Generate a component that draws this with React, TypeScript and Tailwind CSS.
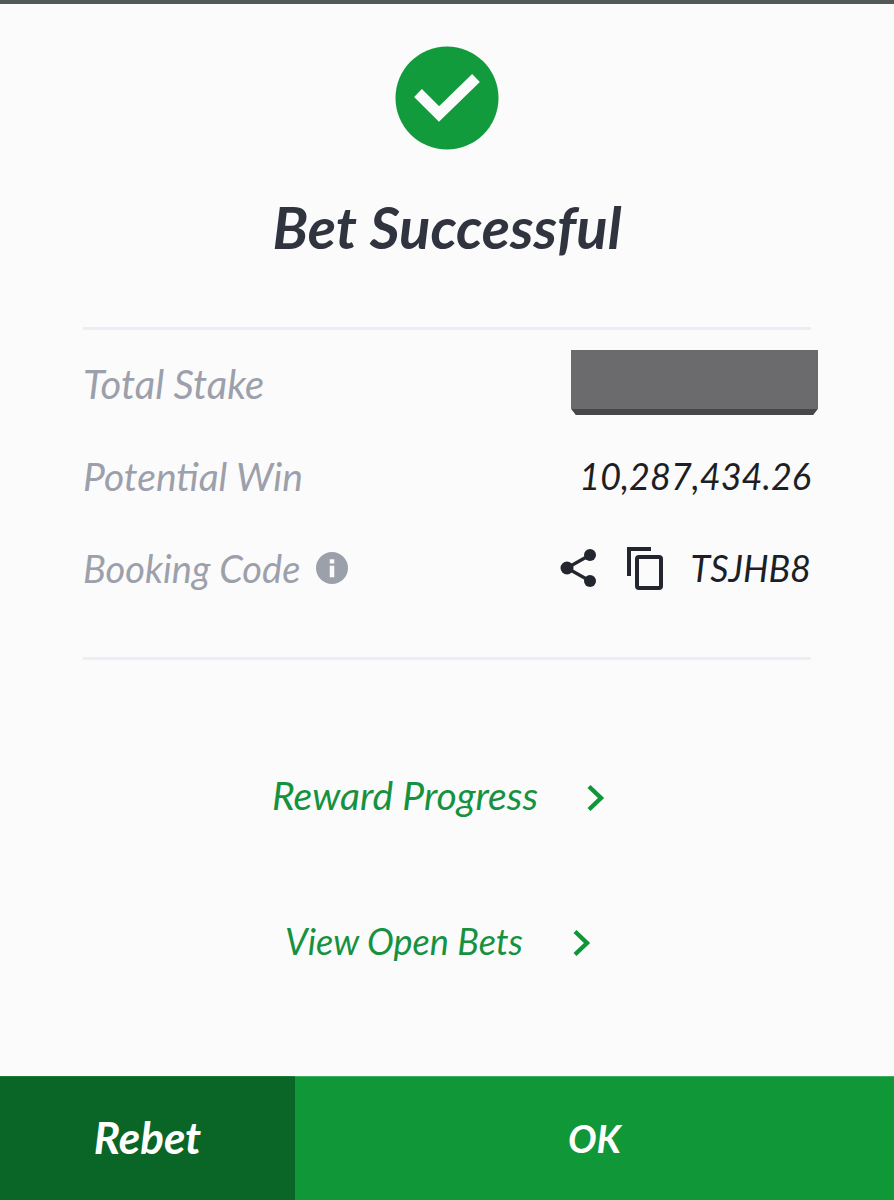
import React from "react";

const hand = "font-['Lato','Liberation_Sans',sans-serif] italic";

function Row({ label, labelClass, children, extra }: { label: string; labelClass: string; children: React.ReactNode; extra?: React.ReactNode }) {
  return (
    <div className="flex h-[92px] items-center justify-between">
      <div className="flex items-center gap-[16px]">
        <span className={`${labelClass} leading-none text-[#9ca0ab]`}>{label}</span>
        {extra}
      </div>
      {children}
    </div>
  );
}

function Chevron() {
  return (
    <svg width="22" height="30" viewBox="0 0 22 30" fill="none" className="mt-[4px] shrink-0">
      <path d="M4 3.5 16 15 4 26.5" stroke="#0f9636" strokeWidth="4.4" />
    </svg>
  );
}

export default function App() {
  return (
    <div className={`flex h-[1200px] w-[894px] flex-col overflow-hidden bg-[#fbfbfc] ${hand}`}>
      <div className="h-[4px] bg-[#535a55]" />
      <div className="flex flex-1 flex-col items-center pt-[42px]">
        <svg width="104" height="104" viewBox="0 0 104 104">
          <circle cx="52" cy="52" r="51.5" fill="#129b3c" />
          <path d="M23 47 44 68 81 32" fill="none" stroke="#fbfbfc" strokeWidth="11" />
        </svg>
        <h1 className="mt-[42px] text-[58px] font-bold leading-[70px] text-[#30343f]">Bet Successful</h1>
        <div className="mt-[65px] w-[728px] border-y-[3px] border-[#eceef6] pb-[43px] pt-[8px]">
          <Row label="Total Stake" labelClass="text-[40px]">
            <div className="mr-[-7px] mb-[3px] h-[65px] w-[247px] border-b-[6px] border-[#47474a] bg-[#6b6b6d] [clip-path:polygon(0_0,100%_0,100%_90%,98%_100%,2%_100%,0_90%)]" />
          </Row>
          <Row label="Potential Win" labelClass="text-[39px]">
            <span className="text-[36px] leading-none text-[#1c1f26]">10,287,434.26</span>
          </Row>
          <Row
            label="Booking Code"
            labelClass="text-[38px]"
            extra={
              <svg width="32" height="32" viewBox="0 0 24 24" fill="#9ca0ab">
                <path d="M12 0a12 12 0 1 0 0 24 12 12 0 0 0 0-24Zm1.7 19h-3.4v-8.6h3.4V19Zm0-10.4h-3.4V5.4h3.4v3.2Z" />
              </svg>
            }
          >
            <div className="flex items-center">
              <svg width="38" height="40" viewBox="0 0 38 40" className="text-[#23262e]">
                <g fill="currentColor">
                  <circle cx="7" cy="20" r="6.5" />
                  <circle cx="30" cy="7" r="6" />
                  <circle cx="30" cy="33" r="6" />
                </g>
                <path d="M7 20 30 7M7 20 30 33" stroke="currentColor" strokeWidth="3.2" />
              </svg>
              <svg width="40" height="44" viewBox="0 0 40 44" fill="none" stroke="#23262e" strokeWidth="4" className="ml-[28px]">
                <path d="M3 30V3h22" />
                <rect x="11" y="11" width="24" height="31" rx="2" />
              </svg>
              <span className="ml-[25px] text-[36px] leading-none text-[#1c1f26]">TSJHB8</span>
            </div>
          </Row>
        </div>
        <div className="mr-[15px] mt-[116px] flex w-[335px] items-center justify-between">
          <span className="text-[39px] leading-none text-[#16923f]">Reward Progress</span>
          <Chevron />
        </div>
        <div className="mr-[16px] mt-[106px] flex h-[39px] w-[308px] items-center justify-between">
          <span className="text-[36px] leading-none text-[#16923f]">View Open Bets</span>
          <Chevron />
        </div>
      </div>
      <div className="flex h-[124px] text-white">
        <button className="w-[295px] border-t border-[#1a7a3a] bg-[#0a6626] pb-[3px] text-[44px] font-bold italic">Rebet</button>
        <button className="flex-1 border-t border-[#3fae65] bg-[#0f9738] text-[38px] font-bold italic">OK</button>
      </div>
    </div>
  );
}
